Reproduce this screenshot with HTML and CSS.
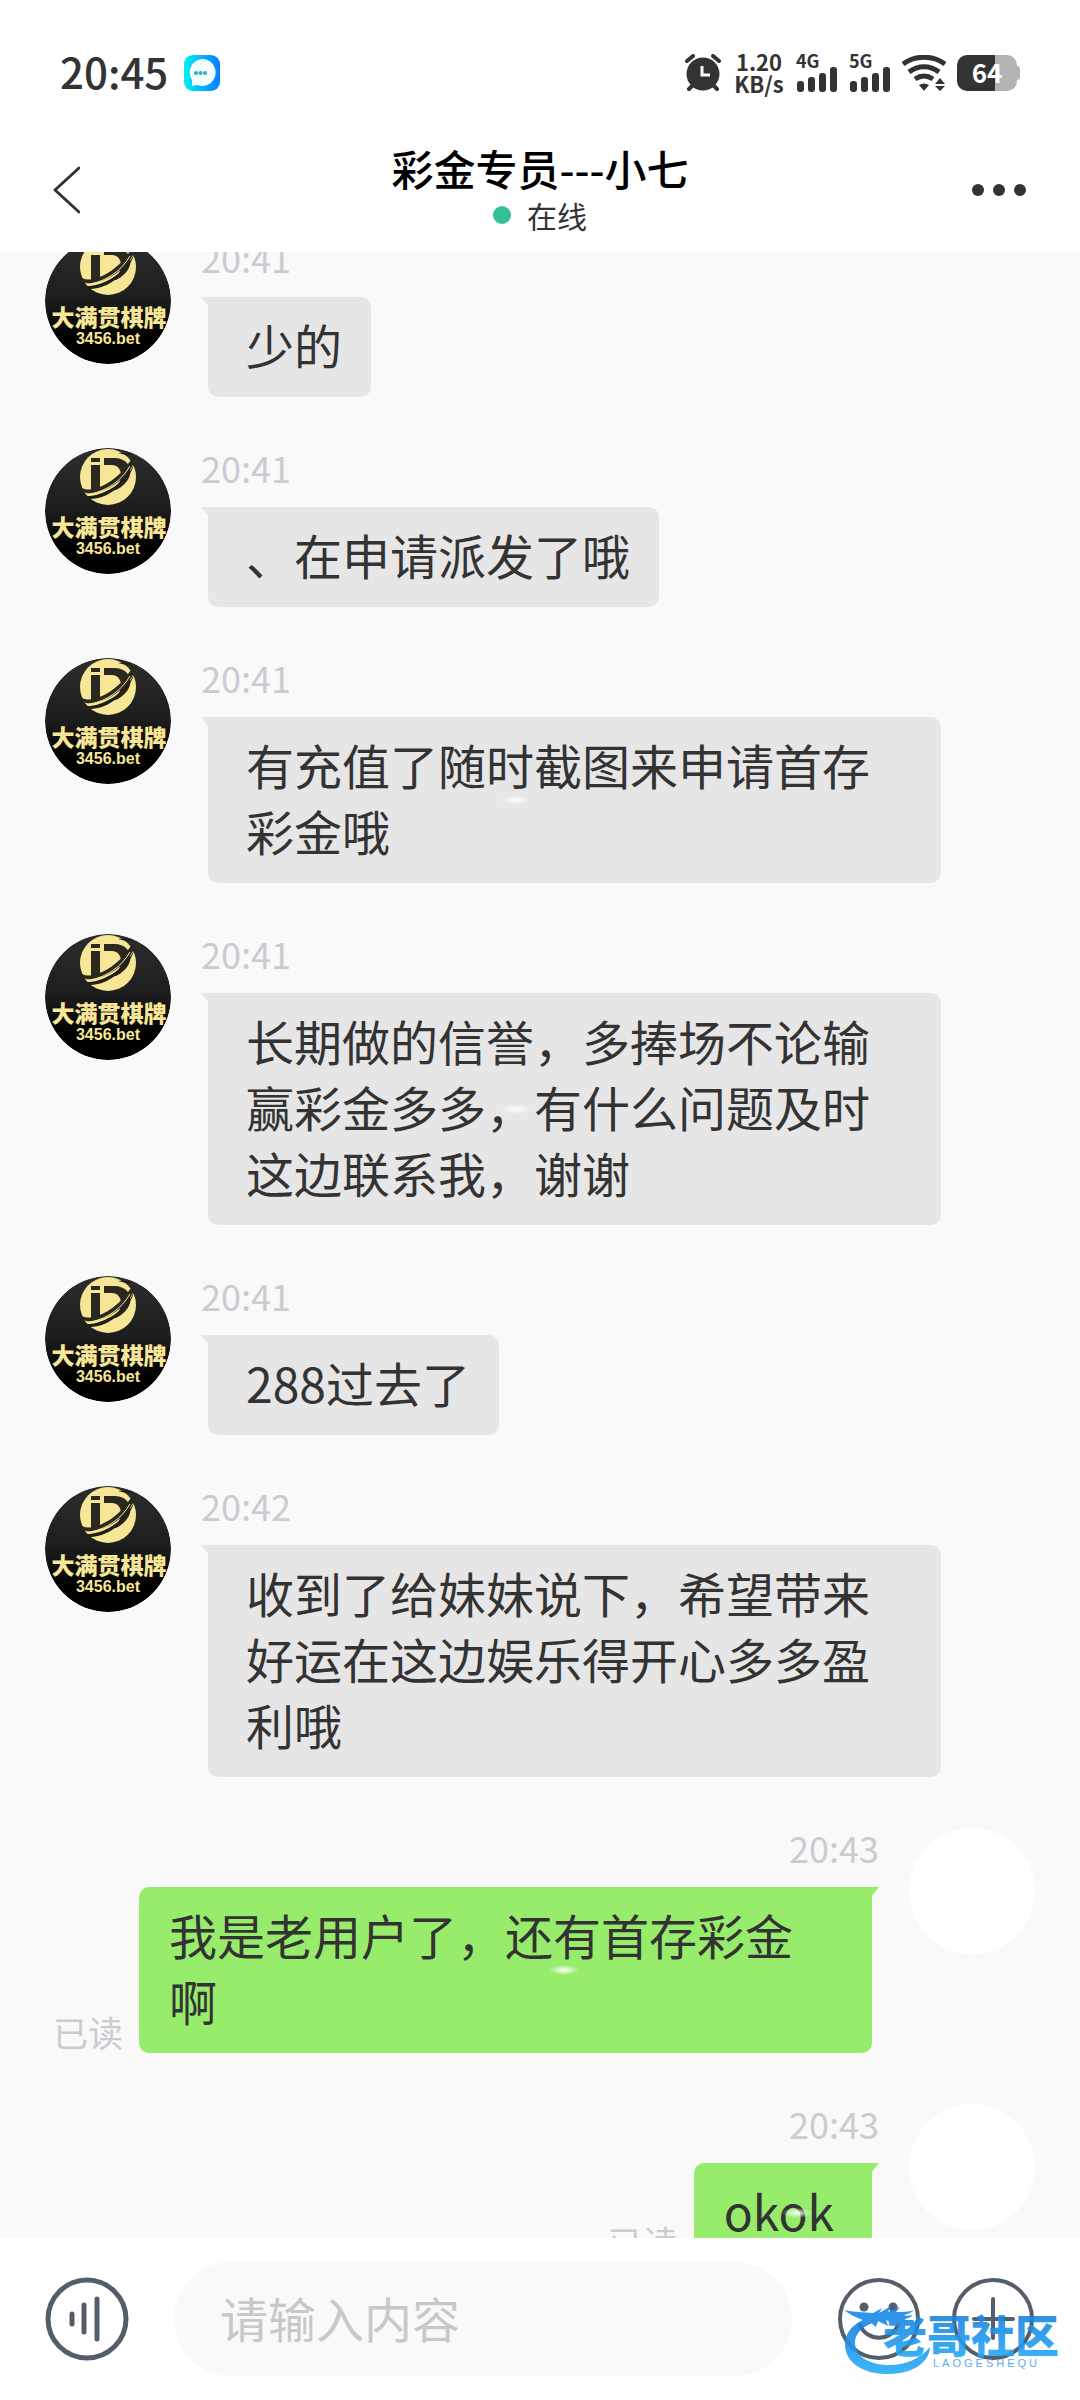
FILE: index.html
```html
<!DOCTYPE html>
<html lang="zh-CN">
<head>
    <meta charset="UTF-8">
    <meta name="viewport" content="width=device-width, initial-scale=1.0">
    <title>彩金专员---小七</title>
    <link rel="stylesheet" href="styles.css">
</head>
<body>
    <!-- Logo et icônes réutilisés -->
    <svg class="defs" width="0" height="0" aria-hidden="true">
        <defs>
            <linearGradient id="night" x1="0" y1="0" x2="0" y2="1">
                <stop offset="0" stop-color="#2e2e2e"/>
                <stop offset="0.5" stop-color="#1c1c1c"/>
                <stop offset="0.8" stop-color="#000"/>
            </linearGradient>
            <linearGradient id="app" x1="0" y1="0" x2="1" y2="0">
                <stop offset="0" stop-color="#00f0f0"/>
                <stop offset="1" stop-color="#0a7cff"/>
            </linearGradient>
            <linearGradient id="water" x1="0" y1="0" x2="0" y2="1">
                <stop offset="0" stop-color="#1778d8"/>
                <stop offset="1" stop-color="#27b0fa"/>
            </linearGradient>
            <symbol id="logo" viewBox="0 0 126 126">
                <circle cx="63" cy="63" r="63" fill="url(#night)"/>
                <circle cx="63" cy="29" r="28" fill="#f7e695"/>
                <path d="M46 10h9v4h-9zM46 17h9v24l-9 4zM59 10h10c12 0 18 8 16 17c-2 7-8 12-14 15h-4c6-4 9-9 9-15c0-6-4-10-9-10h-8z" fill="#2a281f"/>
                <path d="M36 38c-1 6 4 8 12 7c15-2 34-14 42-32l2-7c-3 2-6 6-9 10c-9 13-22 22-35 25c-6 1-10 1-12-3z" fill="#2a281f"/>
                <path d="M40 48c18 1 41-13 50-34c-6 21-27 37-45 37z" fill="#1f1e1a"/>
                <path d="M45 46c17-3 32-14 40-28" fill="none" stroke="#f7e695" stroke-width="1"/>
                <path d="M73 5c5-1 11-1 15 2l-7 0z" fill="#1f1e1a"/>
                <text x="64" y="88" text-anchor="middle" class="logo-name">大满贯棋牌</text>
                <text x="63" y="106" text-anchor="middle" class="logo-site">3456.bet</text>
            </symbol>
        </defs>
    </svg>

    <!-- Barre d'état -->
    <div class="status">
        <span class="clock">20:45</span>
        <svg width="36" height="36" viewBox="0 0 36 36">
            <rect width="36" height="36" rx="9" fill="url(#app)"/>
            <path d="M18 4a13.500 13.500 0 1 1-5 26l-5 1v-6A13.500 13.500 0 0 1 18 4z" fill="#f4fdff"/>
            <g fill="#1fb3c8"><circle cx="12" cy="18" r="2"/><circle cx="16.500" cy="18" r="2"/><circle cx="21" cy="18" r="2"/></g>
        </svg>
        <div class="status-right">
            <svg width="38" height="38" viewBox="0 0 38 38" fill="none" stroke="#333" stroke-linecap="round">
                <circle cx="19" cy="20" r="16.500" fill="#333" stroke="none"/>
                <path d="M3 7l6-5M35 7l-6-5M5 35l5-5M33 35l-5-5" stroke-width="4"/>
                <path d="M18 12v9h8" stroke="#fff" stroke-width="3" stroke-linecap="butt"/>
            </svg>
            <div class="speed">1.20<br>KB/s</div>
            <div class="signal">
                <span>4G</span>
                <svg width="42" height="26" viewBox="0 0 42 26" fill="#333"><rect x="1" y="15" width="7" height="11" rx="3"/><rect x="12" y="11" width="7" height="15" rx="3"/><rect x="23" y="7" width="7" height="19" rx="3"/><rect x="34" y="1" width="7" height="25" rx="3"/></svg>
            </div>
            <div class="signal">
                <span>5G</span>
                <svg width="42" height="26" viewBox="0 0 42 26" fill="#333"><rect x="1" y="15" width="7" height="11" rx="3"/><rect x="12" y="11" width="7" height="15" rx="3"/><rect x="23" y="7" width="7" height="19" rx="3"/><rect x="34" y="1" width="7" height="25" rx="3"/></svg>
            </div>
            <svg width="44" height="36" viewBox="0 0 44 36" fill="none" stroke="#333" stroke-width="5">
                <path d="M1 9c12-9 30-9 42 0M7 17c9-7 21-7 30 0M13 24c6-4 12-4 18 0"/>
                <path d="M17 30q5-3 10 0l-5 6zM33 29h10l-5-6zM33 31h10l-5 5z" fill="#333" stroke="none"/>
            </svg>
            <div class="battery">64</div>
        </div>
    </div>

    <!-- En-tête de la conversation -->
    <header class="topbar">
        <button type="button" class="icon-btn" aria-label="返回">
            <svg width="28" height="50" viewBox="0 0 28 50" fill="none" stroke="#333" stroke-width="3" stroke-linecap="round" stroke-linejoin="round"><path d="M27 3L3 25l24 22"/></svg>
        </button>
        <div class="peer">
            <h1>彩金专员---小七</h1>
            <p><i class="dot"></i>在线</p>
        </div>
        <button type="button" class="icon-btn" aria-label="更多">
            <svg width="56" height="14" viewBox="0 0 56 14" fill="#333"><circle cx="6" cy="7" r="6"/><circle cx="27" cy="7" r="6"/><circle cx="48" cy="7" r="6"/></svg>
        </button>
    </header>

    <!-- Messages -->
    <main class="chat">
        <div class="messages">
            <div class="msg">
                <svg class="avatar"><use href="#logo"/></svg>
                <div class="body">
                    <time>20:41</time>
                    <div class="line"><p class="bubble">少的</p></div>
                </div>
            </div>
            <div class="msg">
                <svg class="avatar"><use href="#logo"/></svg>
                <div class="body">
                    <time>20:41</time>
                    <div class="line"><p class="bubble">、在申请派发了哦</p></div>
                </div>
            </div>
            <div class="msg">
                <svg class="avatar"><use href="#logo"/></svg>
                <div class="body">
                    <time>20:41</time>
                    <div class="line"><p class="bubble shine">有充值了随时截图来申请首存彩金哦</p></div>
                </div>
            </div>
            <div class="msg">
                <svg class="avatar"><use href="#logo"/></svg>
                <div class="body">
                    <time>20:41</time>
                    <div class="line"><p class="bubble shine">长期做的信誉，多捧场不论输赢彩金多多，有什么问题及时这边联系我，谢谢</p></div>
                </div>
            </div>
            <div class="msg">
                <svg class="avatar"><use href="#logo"/></svg>
                <div class="body">
                    <time>20:41</time>
                    <div class="line"><p class="bubble">288过去了</p></div>
                </div>
            </div>
            <div class="msg">
                <svg class="avatar"><use href="#logo"/></svg>
                <div class="body">
                    <time>20:42</time>
                    <div class="line"><p class="bubble">收到了给妹妹说下，希望带来好运在这边娱乐得开心多多盈利哦</p></div>
                </div>
            </div>
            <div class="msg mine">
                <div class="avatar"></div>
                <div class="body">
                    <time>20:43</time>
                    <div class="line"><p class="bubble shine">我是老用户了，还有首存彩金啊</p><span class="read">已读</span></div>
                </div>
            </div>
            <div class="msg mine">
                <div class="avatar"></div>
                <div class="body">
                    <time>20:43</time>
                    <div class="line"><p class="bubble shine">okok</p><span class="read">已读</span></div>
                </div>
            </div>
        </div>
    </main>

    <!-- Zone de saisie -->
    <form class="composer">
        <button type="button" class="icon-btn" aria-label="语音">
            <svg width="84" height="84" viewBox="0 0 84 84" fill="none" stroke="#535e6a" stroke-width="5" stroke-linecap="round"><circle cx="42" cy="42" r="39"/><path d="M27 37v10M39 28v27M52 22v40"/></svg>
        </button>
        <input type="text" class="field" placeholder="请输入内容" aria-label="请输入内容">
        <div class="tools">
            <button type="button" class="icon-btn" aria-label="表情">
                <svg width="84" height="84" viewBox="0 0 84 84" fill="none" stroke="#535e6a" stroke-width="4" stroke-linecap="round"><circle cx="42" cy="42" r="39"/><circle cx="27" cy="30" r="4.500" fill="#535e6a" stroke="none"/><circle cx="56" cy="30" r="4.500" fill="#535e6a" stroke="none"/><path d="M23 48c7 17 31 17 38 0"/></svg>
            </button>
            <button type="button" class="icon-btn" aria-label="添加">
                <svg width="84" height="84" viewBox="0 0 84 84" fill="none" stroke="#535e6a" stroke-width="4" stroke-linecap="round"><circle cx="42" cy="42" r="39"/><path d="M42 22v39M23 42h39"/></svg>
            </button>
        </div>
        <svg class="watermark" width="222" height="76" viewBox="0 0 222 76">
            <path d="M42 15C20 16 3 28 3 44c0 20 20 30 42 30c24 0 42-10 43-27c-9 11-24 18-40 18c-20 0-35-8-35-22c0-12 12-21 32-23z" fill="url(#water)"/>
            <path d="M2 10c9 2 19 2 29 3l9-5l-3 5l12-7l-3 6l12-5l-4 5c7 0 13 0 18-2c-4 4-9 5-13 5c4 1 8 1 12 0c-4 4-10 5-15 4l7 4c-8 1-14 0-19-3l2 6l-10-5l-2 6l-6-5l-12 5l5-7c-8-3-14-6-19-10z" fill="#178be6"/>
            <text x="41" y="53" class="mark-name" fill="url(#water)">老哥社区</text>
            <text x="91" y="67" class="mark-site">LAOGESHEQU</text>
        </svg>
    </form>
</body>
</html>
```
FILE: styles.css
```css
* {
    box-sizing: border-box;
}
body {
    margin: 0;
    height: 100vh;
    display: flex;
    flex-direction: column;
    background-color: #fff;
    color: #333;
    font-family: "Noto Sans CJK SC", "Noto Sans", sans-serif;
}
h1, p {
    margin: 0;
    font-weight: normal;
}
svg {
    display: block;
    flex: none;
}
.defs {
    position: absolute;
}
.icon-btn {
    padding: 0;
    border: none;
    background: none;
}

/* Barre d'état */
.status {
    display: flex;
    align-items: center;
    gap: 16px;
    height: 146px;
    padding: 0 63px 0 60px;
}
.clock {
    padding-bottom: 6px;
    font-size: 42px;
    font-weight: 500;
}
.status-right {
    display: flex;
    align-items: center;
    gap: 11px;
    margin-left: auto;
}
.speed {
    width: 52px;
    padding-bottom: 2px;
    font-size: 22px;
    font-weight: 700;
    line-height: 22px;
    text-align: center;
}
.signal {
    position: relative;
    padding-top: 12px;
}
.signal span {
    position: absolute;
    top: 0;
    left: 0;
    font-size: 18px;
    font-weight: 700;
    line-height: 12px;
}
.battery {
    position: relative;
    width: 60px;
    height: 36px;
    border-radius: 10px;
    background: linear-gradient(to right, #333 64%, #b3b3b3 64%);
    color: #fff;
    font-size: 26px;
    font-weight: 700;
    line-height: 34px;
    text-align: center;
}
.battery::after {
    content: "";
    position: absolute;
    top: 11px;
    right: -3px;
    width: 4px;
    height: 14px;
    border-radius: 0 3px 3px 0;
    background-color: #b3b3b3;
}

/* En-tête */
.topbar {
    display: flex;
    align-items: center;
    justify-content: space-between;
    height: 106px;
    padding: 0 52px 18px;
}
.topbar .icon-btn {
    width: 56px;
}
.peer {
    text-align: center;
}
.peer h1 {
    color: #000;
    font-size: 42px;
    font-weight: 500;
    line-height: 50px;
}
.peer p {
    display: flex;
    align-items: center;
    justify-content: center;
    gap: 16px;
    font-size: 30px;
    line-height: 44px;
}
.dot {
    width: 18px;
    height: 18px;
    border-radius: 50%;
    background-color: #34c198;
}

/* Messages */
.chat {
    flex: 1;
    min-height: 0;
    overflow: hidden;
    background-color: #f9f9f9;
}
.messages {
    margin-top: -14px;
}
.msg {
    display: flex;
    gap: 37px;
    padding: 0 45px;
    margin-bottom: 51px;
}
.avatar {
    flex: none;
    width: 126px;
    height: 126px;
    border-radius: 50%;
    background-color: #fff;
}
.logo-name {
    fill: #f7e695;
    font-size: 23px;
    font-weight: 900;
}
.logo-site {
    fill: #f7e695;
    font-family: "Liberation Sans", Arial, sans-serif;
    font-size: 16px;
    font-weight: 700;
}
.body {
    flex: 1;
}
.body time {
    display: block;
    margin: 0 -7px 20px;
    color: #c9ccd0;
    font-size: 36px;
    line-height: 39px;
}
.line {
    display: flex;
    align-items: flex-end;
    gap: 16px;
}
.bubble {
    position: relative;
    max-width: calc(100% - 94px);
    padding: 14px 29px 20px 38px;
    border-radius: 0 10px 10px 10px;
    background-color: #e6e6e6;
    font-size: 48px;
    line-height: 66px;
}
.bubble::before {
    content: "";
    position: absolute;
    top: 0;
    left: -7px;
    border-top: 10px solid #e6e6e6;
    border-left: 8px solid transparent;
}
.shine::after {
    content: "";
    position: absolute;
    top: calc(50% - 5px);
    left: calc(42% - 15px);
    width: 30px;
    height: 10px;
    background: radial-gradient(closest-side, #fff, transparent);
}
.mine, .mine .line {
    flex-direction: row-reverse;
}
.mine time {
    text-align: right;
}
.mine .bubble {
    padding: 14px 38px 20px 30px;
    border-radius: 10px 0 10px 10px;
    background-color: #97ec6c;
}
.mine .bubble::before {
    left: auto;
    right: -7px;
    border-top-color: #97ec6c;
    border-left: none;
    border-right: 8px solid transparent;
}
.mine .shine::after {
    left: calc(58% - 15px);
}
.read {
    color: #c9ccd0;
    font-size: 35px;
    line-height: 42px;
}

/* Zone de saisie */
.composer {
    position: relative;
    display: flex;
    align-items: center;
    gap: 45px;
    padding: 24px 45px;
    background-color: #fff;
}
.field {
    flex: 1;
    min-width: 0;
    height: 114px;
    padding: 0 46px 4px;
    border: none;
    border-radius: 57px;
    background-color: #f9f9f9;
    color: #333;
    font-family: inherit;
    font-size: 48px;
}
.field::placeholder {
    color: #c8c8c8;
}
.tools {
    display: flex;
    gap: 30px;
}
.watermark {
    position: absolute;
    right: 16px;
    bottom: 24px;
    opacity: 0.9;
    pointer-events: none;
}
.mark-name {
    font-size: 44px;
    font-weight: 900;
}
.mark-site {
    fill: #4fa3ea;
    font-family: "Liberation Sans", Arial, sans-serif;
    font-size: 11px;
    letter-spacing: 3px;
}
```
